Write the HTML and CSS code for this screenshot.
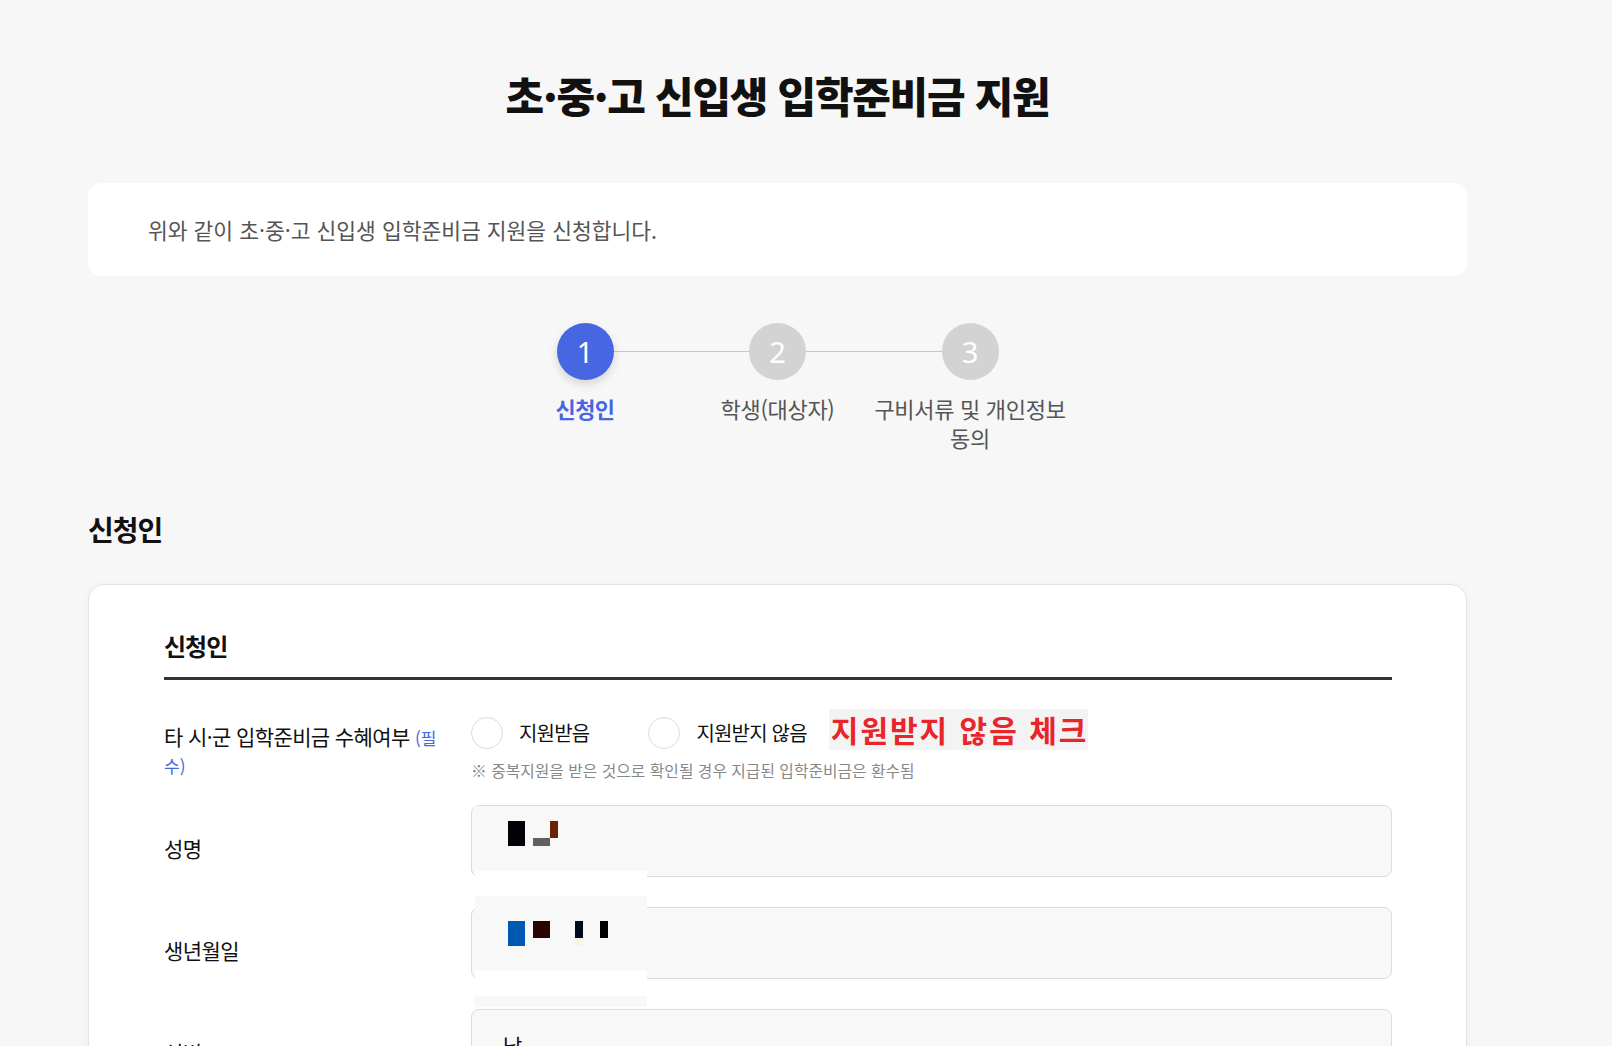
FILE: index.html
```html
<!DOCTYPE html>
<html lang="ko">
<head>
<meta charset="utf-8">
<title>초·중·고 신입생 입학준비금 지원</title>
<link rel="stylesheet" href="styles.css">
</head>
<body>
<div class="page">
  <h1 class="title">초·중·고 신입생 입학준비금 지원</h1>

  <div class="intro">위와 같이 초·중·고 신입생 입학준비금 지원을 신청합니다.</div>

  <ol class="steps">
    <li class="step active">
      <span class="step-num">1</span>
      <span class="step-label">신청인</span>
    </li>
    <li class="step">
      <span class="step-num">2</span>
      <span class="step-label">학생(대상자)</span>
    </li>
    <li class="step">
      <span class="step-num">3</span>
      <span class="step-label">구비서류 및 개인정보 동의</span>
    </li>
  </ol>

  <h2 class="section-title">신청인</h2>

  <section class="card">
    <h3 class="card-title">신청인</h3>

    <div class="row row-radio">
      <div class="label label-top">타 시·군 입학준비금 수혜여부 <span class="req">(필수)</span></div>
      <div class="value">
        <div class="radio-line">
          <label class="radio"><span class="radio-dot"></span><span class="radio-text">지원받음</span></label>
          <label class="radio"><span class="radio-dot"></span><span class="radio-text">지원받지 않음</span></label>
          <span class="annot">지원받지 않음 체크</span>
        </div>
        <p class="note">※ 중복지원을 받은 것으로 확인될 경우 지급된 입학준비금은 환수됨</p>
      </div>
    </div>

    <div class="row row-field row-first">
      <div class="label">성명</div>
      <div class="value field-wrap">
        <div class="input"></div>
        <svg class="mask" width="172" height="202" viewBox="0 0 172 202" aria-hidden="true">
          <rect x="0" y="1" width="172" height="65" fill="#f8f8f8"/>
          <rect x="0" y="66" width="172" height="25" fill="#ffffff"/>
          <rect x="0" y="91" width="172" height="75" fill="#f8f8f8"/>
          <rect x="0" y="166" width="172" height="25" fill="#ffffff"/>
          <rect x="0" y="191" width="172" height="11" fill="#f8f8f8"/>
          <rect x="33" y="16" width="17" height="25" fill="#020208"/>
          <rect x="58" y="33" width="17" height="8" fill="#606060"/>
          <rect x="75" y="16" width="8" height="17" fill="#6a2200"/>
          <rect x="33" y="116" width="17" height="25" fill="#0058b0"/>
          <rect x="58" y="116" width="17" height="17" fill="#2a0500"/>
          <rect x="100" y="116" width="8" height="17" fill="#000a20"/>
          <rect x="100" y="133" width="8" height="8" fill="#f6f6e6"/>
          <rect x="125" y="116" width="8" height="17" fill="#000000"/>
        </svg>
      </div>
    </div>

    <div class="row row-field">
      <div class="label">생년월일</div>
      <div class="value"><div class="input"></div></div>
    </div>

    <div class="row row-field">
      <div class="label">성별</div>
      <div class="value"><div class="input">남</div></div>
    </div>

    <div class="row row-field">
      <div class="label">연락처</div>
      <div class="value"><div class="input"></div></div>
    </div>

    <div class="row row-field">
      <div class="label">주소</div>
      <div class="value"><div class="input"></div></div>
    </div>
  </section>
</div>
</body>
</html>
```

FILE: styles.css
```css
* { box-sizing: border-box; }

html, body {
  margin: 0;
  padding: 0;
  background: #f7f7f7;
}

body {
  font-family: "Noto Sans CJK KR", "Noto Sans", sans-serif;
  color: #111;
}

.page {
  margin: 0 145px 0 88px;
  padding: 69px 0 80px;
}

.title {
  margin: 0;
  font-size: 42px;
  line-height: 52px;
  font-weight: 800;
  letter-spacing: -1.3px;
  text-align: center;
  color: #111;
}

.intro {
  margin-top: 62px;
  height: 93px;
  padding: 0 60px;
  display: flex;
  align-items: center;
  background: #fff;
  border-radius: 14px;
  font-size: 21.5px;
  color: #555;
  letter-spacing: 0;
}

.steps {
  list-style: none;
  margin: 47px 0 0;
  padding: 0;
  display: flex;
  justify-content: center;
  position: relative;
}

.steps::before {
  content: "";
  position: absolute;
  left: calc(50% - 192px);
  width: 384px;
  top: 28px;
  height: 1px;
  background: #c8c8c8;
}

.step {
  width: 192.5px;
  display: flex;
  flex-direction: column;
  align-items: center;
  position: relative;
  z-index: 1;
}

.step-num {
  width: 57px;
  height: 57px;
  border-radius: 50%;
  background: #d3d3d3;
  color: #fff;
  display: flex;
  align-items: center;
  justify-content: center;
  font-family: "Noto Sans", "Noto Sans CJK KR", sans-serif;
  font-size: 29px;
  font-weight: 400;
}

.step.active .step-num {
  background: #4766e1;
  box-shadow: 0 4px 10px rgba(0, 0, 0, 0.14);
}

.step-label {
  width: 210px;
  flex: none;
  margin-top: 14px;
  font-size: 22px;
  line-height: 29px;
  color: #555;
  text-align: center;
  word-break: keep-all;
  letter-spacing: -0.3px;
}

.step.active .step-label {
  color: #4766e1;
  font-weight: 700;
  letter-spacing: -0.6px;
}

.section-title {
  margin: 59px 0 0;
  font-size: 28px;
  line-height: 36px;
  font-weight: 700;
  letter-spacing: -1px;
}

.card {
  margin-top: 37px;
  background: #fff;
  border: 1px solid #e3e3e3;
  border-radius: 16px;
  padding: 46px 74px 60px 75px;
  box-shadow: 0 2px 12px rgba(0, 0, 0, 0.035);
}

.card-title {
  margin: 0;
  padding-bottom: 16px;
  border-bottom: 3px solid #333;
  font-size: 24px;
  line-height: 30px;
  font-weight: 700;
  letter-spacing: -1px;
}

.row {
  display: grid;
  grid-template-columns: 307px 1fr;
}

.row-radio {
  margin-top: 36px;
  align-items: start;
}

.label {
  font-size: 21px;
  line-height: 27px;
  letter-spacing: -0.6px;
  color: #111;
  padding-right: 22px;
}

.label-top {
  margin-top: 7px;
}

.req {
  font-size: 17px;
  color: #4766e1;
  letter-spacing: 0;
}

.radio-line {
  height: 33px;
  display: flex;
  align-items: center;
}

.radio {
  display: flex;
  align-items: center;
  margin-right: 59px;
}

.radio + .radio {
  margin-right: 22px;
}

.radio-dot {
  width: 32px;
  height: 32px;
  border: 1px solid #dcdcdc;
  border-radius: 50%;
  background: #fff;
  flex: none;
}

.radio-text {
  margin-left: 16px;
  font-size: 20px;
  letter-spacing: -0.8px;
  color: #111;
}

.annot {
  height: 41px;
  line-height: 41px;
  padding: 0 0 0 2px;
  margin-bottom: 7px;
  background: #f3f3f3;
  color: #e8252b;
  font-size: 30px;
  font-weight: 700;
  letter-spacing: 2px;
  white-space: nowrap;
}

.note {
  margin: 10px 0 0;
  font-size: 15.8px;
  line-height: 24px;
  color: #888;
}

.row-field {
  margin-top: 30px;
  align-items: center;
}

.row-field.row-first {
  margin-top: 22px;
}

.row-field .label {
  padding-top: 14px;
}

.field-wrap {
  position: relative;
}

.input {
  height: 72px;
  border: 1px solid #dcdcdc;
  border-radius: 8px;
  background: #f8f8f8;
  padding: 0 31px;
  display: flex;
  align-items: center;
  font-size: 21px;
  color: #111;
}

.mask {
  position: absolute;
  left: 4px;
  top: 0;
  z-index: 2;
  display: block;
}
```
